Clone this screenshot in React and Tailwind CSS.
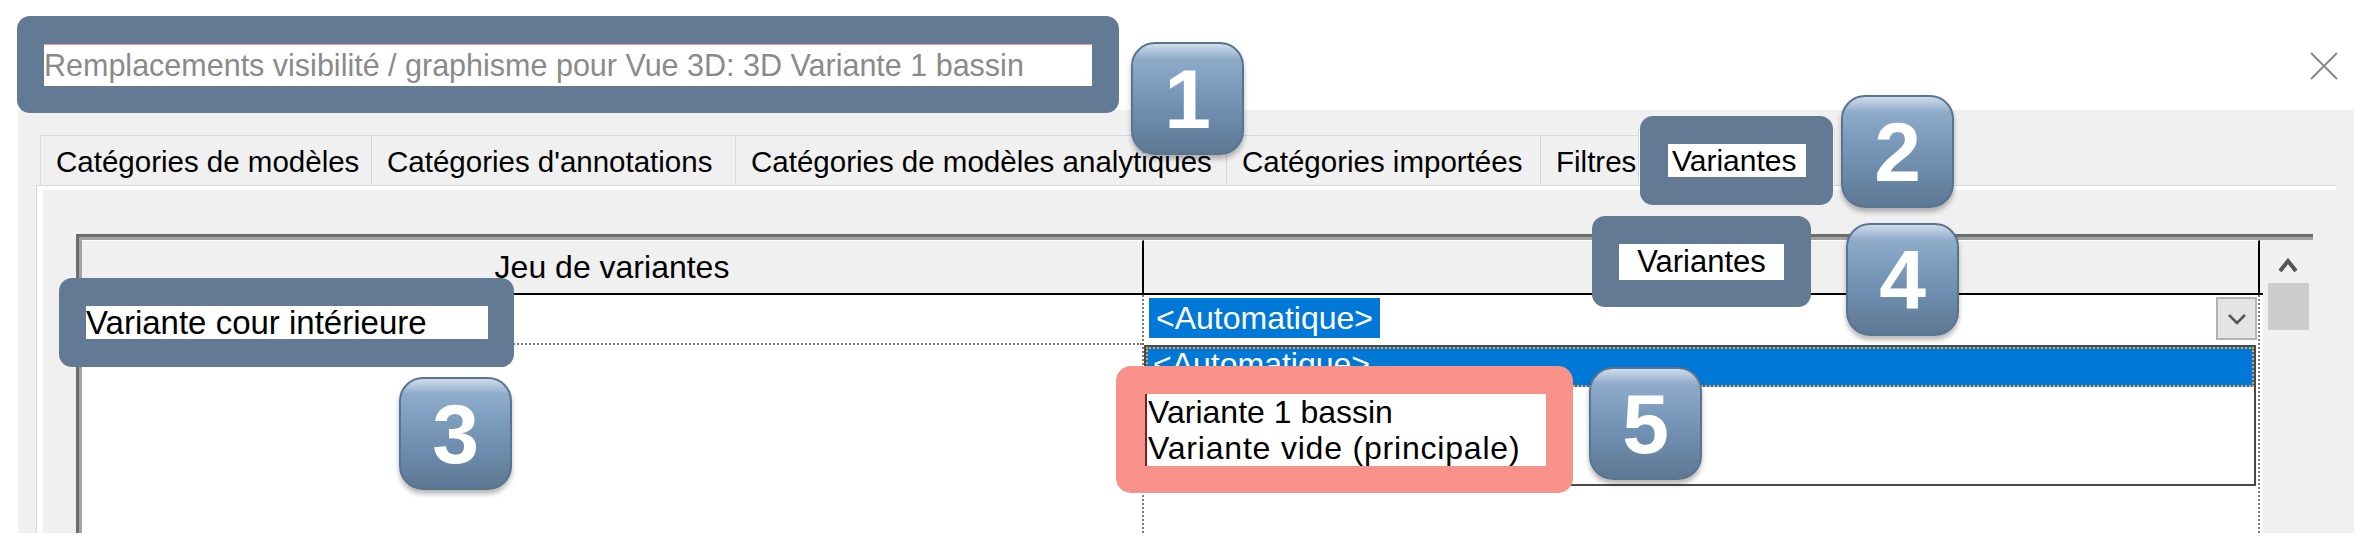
import React from "react";

const tabs = [
  { label: "Catégories de modèles", w: "w-[331px]" },
  { label: "Catégories d'annotations", w: "w-[364px]" },
  { label: "Catégories de modèles analytiques", w: "w-[491px]" },
  { label: "Catégories importées", w: "w-[314px]" },
  { label: "Filtres", w: "w-[98px]" },
];

const Badge = ({ n, className }) => (
  <div
    className={`absolute w-[113px] h-[113px] rounded-[24px] border-2 border-[#5a7490] bg-[linear-gradient(180deg,#cfdceb_0%,#8eabc9_14%,#7b9bbd_40%,#6a88a8_72%,#5d7893_100%)] shadow-[0_4px_5px_rgba(0,0,0,0.28)] flex items-center justify-center ${className}`}
  >
    <span className="text-white font-bold text-[84px] leading-none">{n}</span>
  </div>
);

const Callout = ({ className, children }) => (
  <div className={`absolute bg-[#627a94] rounded-[13px] ${className}`}>{children}</div>
);

export default function App() {
  return (
    <div className="relative w-[2372px] h-[546px] overflow-hidden bg-white font-['Liberation_Sans',Arial,sans-serif] text-black">
      {/* title bar (title text sits in callout 1) */}
      <div className="h-[110px] flex items-start justify-end pr-[34px]">
        <svg className="mt-[52px]" width="28" height="28" viewBox="0 0 28 28">
          <path d="M1 1 L27 27 M27 1 L1 27" stroke="#8a8a8a" strokeWidth="2" fill="none" />
        </svg>
      </div>

      {/* dialog body */}
      <div className="mx-[18px] h-[423px] bg-[#f0f0f0] flex flex-col">
        {/* tabs */}
        <div className="h-[75px] pl-[22px] flex items-end">
          {tabs.map((t) => (
            <div
              key={t.label}
              className={`${t.w} h-[50px] border-t border-l border-[#d9d9d9] bg-[#f0f0f0] flex items-center pl-[15px] pt-[3px] text-[29.5px] whitespace-nowrap`}
            >
              {t.label}
            </div>
          ))}
          {/* selected tab, label shown in callout 2 */}
          <div className="w-[197px] h-[57px] border border-b-0 border-[#d9d9d9] bg-white mb-[-1px]" />
        </div>

        {/* tab panel */}
        <div className="ml-[18px] mr-[18px] flex-1 border-t border-l border-[#d9d9d9] bg-[#f0f0f0]">
          <div className="h-full border-t-4 border-l-[6px] border-white bg-[#f0f0f0] pl-[33px] pt-[44px]">
            {/* grid */}
            <div className="w-[2237px] h-full border-t-[3px] border-l-[3px] border-[#6c6c6c]">
              <div className="h-full border-t-[3px] border-l-[3px] border-[#a2a2a2] bg-white flex">
                <div className="w-[2181px] flex flex-col">
                  {/* header */}
                  <div className="h-[55px] flex border-b-2 border-black bg-[#f0f0f0] text-[32px]">
                    <div className="w-[1062px] border-r-2 border-black border-t border-t-white flex items-center justify-center">
                      Jeu de variantes
                    </div>
                    <div className="w-[1116px] border-r-2 border-black border-t border-t-white" />
                  </div>
                  {/* body */}
                  <div className="flex-1 flex">
                    <div className="w-[1062px] border-r-2 border-dotted border-[#7a7a7a]">
                      <div className="h-[50px] border-b-2 border-dotted border-[#7a7a7a]" />
                    </div>
                    <div className="w-[1116px] border-r-2 border-dotted border-[#7a7a7a] flex flex-col">
                      <div className="h-[50px] flex items-start justify-between pl-[5px] pr-[1px] pt-[2px]">
                        <span className="mt-[1px] h-[40px] px-[7px] bg-[#0078d7] text-white text-[32px] flex items-center">
                          &lt;Automatique&gt;
                        </span>
                        <div className="w-[41px] h-[43px] bg-[#e4e4e4] border-2 border-[#b4b4b4] flex items-center justify-center">
                          <svg width="20" height="12" viewBox="0 0 20 12">
                            <path d="M2 2 L10 10 L18 2" stroke="#555" strokeWidth="2.5" fill="none" />
                          </svg>
                        </div>
                      </div>
                      {/* dropdown list, its other items shown in callout 5 */}
                      <div className="h-[141px] mr-[2px] border-2 border-[#4a4a4a] bg-white flex flex-col">
                        <div className="h-[40px] bg-[#0078d7] border-2 border-dotted border-[#f2a03c] text-white text-[32px] leading-[30px] pl-[5px]">
                          &lt;Automatique&gt;
                        </div>
                      </div>
                    </div>
                  </div>
                </div>
                {/* scrollbar */}
                <div className="w-[50px] bg-[#f0f0f0] flex flex-col items-center">
                  <svg className="mt-[18px]" width="20" height="15" viewBox="0 0 20 15">
                    <path d="M2 13 L10 3 L18 13" stroke="#555" strokeWidth="4" fill="none" />
                  </svg>
                  <div className="mt-[10px] w-[41px] h-[47px] bg-[#cdcdcd]" />
                </div>
              </div>
            </div>
          </div>
        </div>
      </div>

      {/* annotations */}
      <Callout className="left-[17px] top-[16px] w-[1102px] h-[97px] pl-[27px] pt-[28px] pr-[27px]">
        <div className="h-[42px] bg-white border-t border-[#f2a294] text-[30.5px] leading-[40px] text-[#8a8a8a] whitespace-nowrap">
          Remplacements visibilité / graphisme pour Vue 3D: 3D Variante 1 bassin
        </div>
      </Callout>
      <Badge n="1" className="left-[1131px] top-[42px]" />

      <Callout className="left-[1640px] top-[116px] w-[193px] h-[89px] pl-[28px] pt-[28px]">
        <div className="w-[138px] h-[33px] bg-white text-[30px] leading-[33px] pl-[4px]">Variantes</div>
      </Callout>
      <Badge n="2" className="left-[1841px] top-[95px]" />

      <Callout className="left-[59px] top-[278px] w-[455px] h-[89px] pl-[27px] pt-[28px]">
        <div className="w-[402px] h-[33px] bg-white text-[33px] leading-[33px] whitespace-nowrap">Variante cour intérieure</div>
      </Callout>
      <Badge n="3" className="left-[399px] top-[377px]" />

      <Callout className="left-[1592px] top-[216px] w-[219px] h-[91px] pl-[27px] pt-[28px]">
        <div className="w-[165px] h-[36px] bg-white text-[31px] leading-[36px] text-center">Variantes</div>
      </Callout>
      <Badge n="4" className="left-[1846px] top-[223px]" />

      <div className="absolute left-[1116px] top-[366px] w-[457px] h-[127px] rounded-[15px] bg-[#f8918a] pl-[29px] pt-[28px]">
        <div className="w-[401px] h-[72px] bg-white border-l-2 border-[#7a1f1f] text-[32px] leading-[36px] pl-[1px] whitespace-nowrap">
          <div>Variante 1 bassin</div>
          <div className="tracking-[0.8px]">Variante vide (principale)</div>
        </div>
      </div>
      <Badge n="5" className="left-[1589px] top-[367px]" />
    </div>
  );
}
